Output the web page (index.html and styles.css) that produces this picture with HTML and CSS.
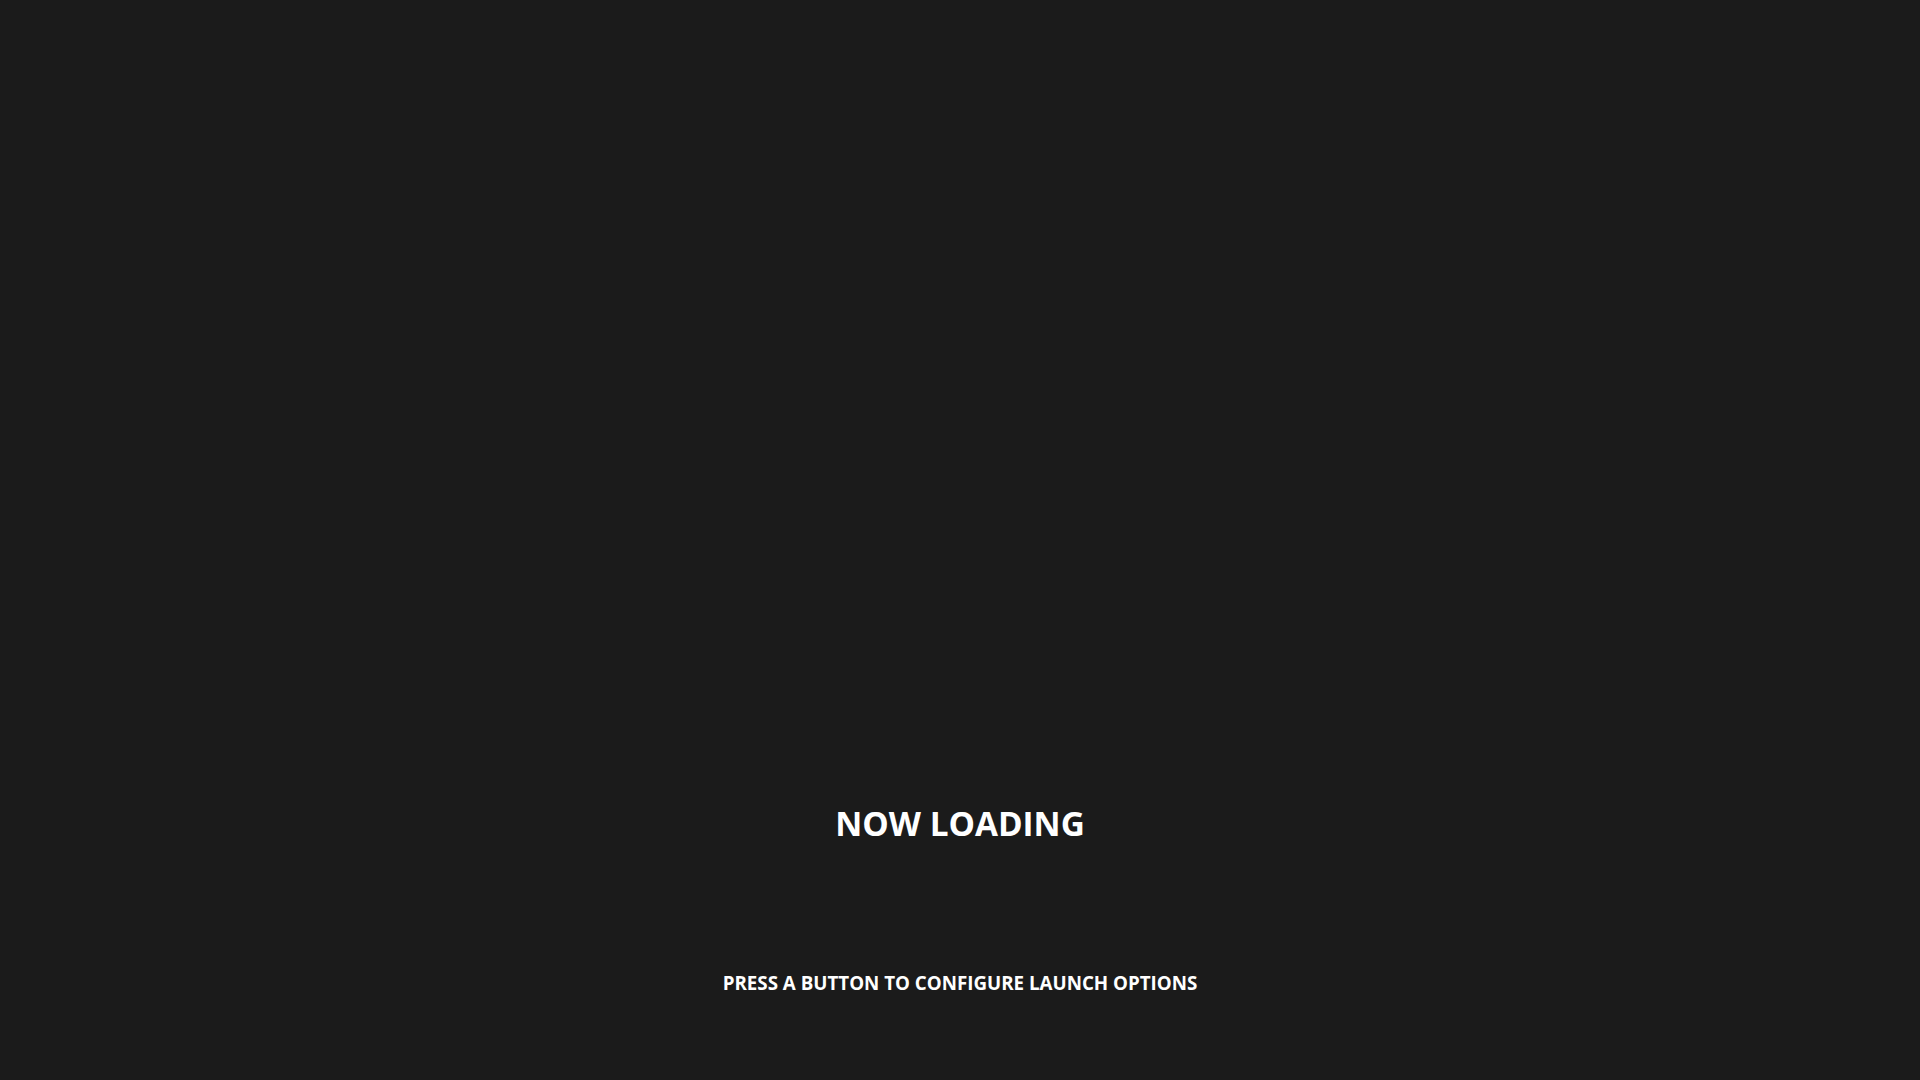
FILE: index.html
```html
<!DOCTYPE html>
<html>
<head>
<meta charset="utf-8">
<link rel="stylesheet" href="styles.css">
</head>
<body>
<main class="screen">
  <h1 class="title">NOW LOADING</h1>
  <p class="hint">PRESS A BUTTON TO CONFIGURE LAUNCH OPTIONS</p>
</main>
</body>
</html>
```
FILE: styles.css
```css
html, body {
  margin: 0;
  padding: 0;
  background: #1b1b1b;
}
.screen {
  width: 1920px;
  height: 1080px;
  display: flex;
  flex-direction: column;
  align-items: center;
  font-family: "Open Sans", "Liberation Sans", sans-serif;
  color: #ffffff;
}
.title {
  margin: 801px 0 0 0;
  font-size: 33.3px;
  font-weight: 700;
  line-height: 44px;
}
.hint {
  margin: 125px 0 0 0;
  font-size: 18.75px;
  font-weight: 700;
  line-height: 26px;
}
```
